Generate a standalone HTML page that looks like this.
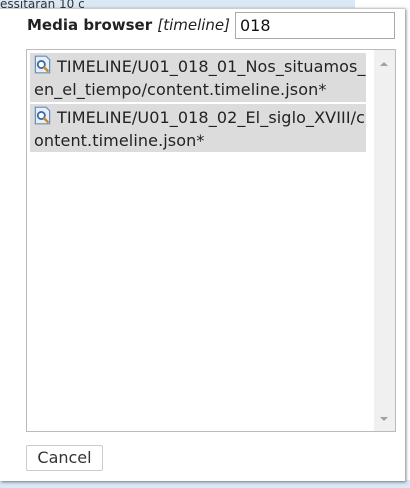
<!DOCTYPE html>
<html><head><style>
body{margin:0;width:410px;height:488px;overflow:hidden;position:relative;background:#fff;font-family:"DejaVu Sans","Liberation Sans",sans-serif;}
.bgtop{position:absolute;left:0;top:0;width:355px;height:9px;background:#dbe8f5;font-size:12px;line-height:8px;color:#333;overflow:hidden}
.bgbot{position:absolute;left:0;top:480px;width:410px;height:8px;background:#dbe8f5}
.dlg{position:absolute;left:0;top:8px;width:405px;height:472px;background:#fff;box-shadow:1px 1px 3px rgba(0,0,0,.5);border-top:1px solid #ccc}
.title{position:absolute;left:27px;top:7px;font-size:15px;font-weight:bold;color:#222;}
.title i{font-weight:normal}
.inp{position:absolute;left:235px;top:3px;width:160px;height:27px;border:1px solid #aaa;box-sizing:border-box;font-size:16px;line-height:25px;padding-left:4px;color:#111}
.list{position:absolute;left:26px;top:40px;width:370px;height:383px;border:1px solid #bbb;box-sizing:border-box}
.sb{position:absolute;right:0;top:0;width:21px;height:100%;background:#f0f0f0}
.up,.dn{position:absolute;left:6px;width:0;height:0;border-left:4px solid transparent;border-right:4px solid transparent}
.up{top:12px;border-bottom:4px solid #a0a0a0}
.dn{bottom:10px;border-top:4px solid #a0a0a0}
.item{position:absolute;left:3px;width:336px;background:#dcdcdc;font-size:16px;line-height:23px;color:#222;padding:2px 0 2px 4px;box-sizing:border-box;white-space:nowrap;letter-spacing:0.1px}
.ic{display:inline-block;width:17px;height:19px;vertical-align:-2px;margin-right:6px}
.btn{position:absolute;left:26px;top:436px;width:77px;height:26px;border:1px solid #ccc;border-radius:2px;box-sizing:border-box;font-size:16px;text-align:center;line-height:24px;color:#333}
</style></head><body>
<div class="bgtop">essitarán 10 c</div>
<div class="bgbot"></div>
<div class="dlg">
<div class="title">Media browser <i>[timeline]</i></div>
<div class="inp">018</div>
<div class="list">
<div class="sb"><div class="up"></div><div class="dn"></div></div>
<div class="item" style="top:3px;height:49px"><svg class="ic" viewBox="0 0 14 16"><path d="M1 1h9l3 3v11H1z" fill="#e8eef8" stroke="#6a8ab8"/><circle cx="6" cy="8" r="3" fill="#fff" stroke="#3a6aa8" stroke-width="1.5"/><path d="M8 10l4 4" stroke="#c88a2a" stroke-width="2"/></svg>TIMELINE/U01_018_01_Nos_situamos_<br>en_el_tiempo/content.timeline.json*</div>
<div class="item" style="top:54px;height:48px"><svg class="ic" viewBox="0 0 14 16"><path d="M1 1h9l3 3v11H1z" fill="#e8eef8" stroke="#6a8ab8"/><circle cx="6" cy="8" r="3" fill="#fff" stroke="#3a6aa8" stroke-width="1.5"/><path d="M8 10l4 4" stroke="#c88a2a" stroke-width="2"/></svg>TIMELINE/U01_018_02_El_siglo_XVIII/c<br>ontent.timeline.json*</div>
</div>
<div class="btn">Cancel</div>
</div>
</body></html>
